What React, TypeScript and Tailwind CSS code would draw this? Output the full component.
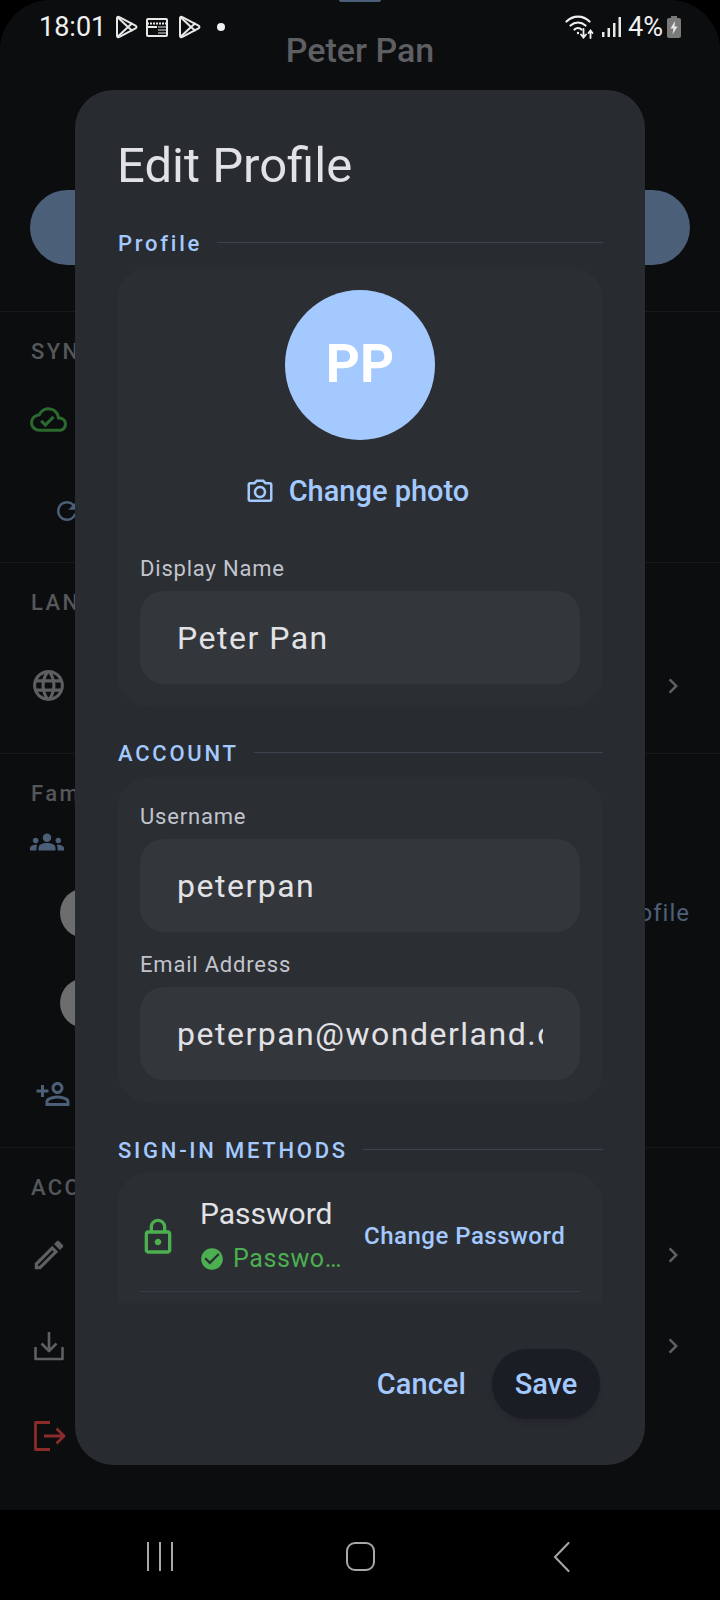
import React from "react";
import {
  MdOutlineCameraAlt,
  MdOutlineCloudDone,
  MdRefresh,
  MdLanguage,
  MdGroups,
  MdOutlinePersonAddAlt,
  MdOutlineEdit,
  MdChevronRight,
  MdOutlineLock,
  MdCheckCircle,
} from "react-icons/md";

function PlayIcon() {
  return (
    <svg width="23" height="24" viewBox="0 0 23 24" fill="none" stroke="#e8e8e8" strokeWidth="2" strokeLinejoin="round" strokeLinecap="round">
      <path d="M2 3.5C2 2 3.2 1.4 4.4 2.1L20.5 10.6C21.8 11.3 21.8 12.7 20.5 13.4L4.4 21.9C3.2 22.6 2 22 2 20.5Z" />
      <path d="M2.6 2.2L13 12L2.6 21.8M13 12L17 8.6M13 12L17 15.4" />
    </svg>
  );
}

function NewsIcon() {
  return (
    <svg width="22" height="22" viewBox="0 0 22 22" fill="none">
      <rect x="1" y="3" width="20" height="17" rx="1" stroke="#e8e8e8" strokeWidth="2" />
      <path d="M1 7.5H21" stroke="#e8e8e8" strokeWidth="2" strokeDasharray="2 1" />
      <rect x="1" y="10" width="10" height="2" fill="#e8e8e8" />
      <path d="M12 11H20M12 14H20M12 17H20" stroke="#9a9a9a" strokeWidth="1.5" />
    </svg>
  );
}

function WifiIcon() {
  return (
    <svg width="30" height="26" viewBox="0 0 30 26" fill="none" stroke="#f0f0f0" strokeLinecap="round">
      <path d="M1.5 7.5C8 1 18 1 24.5 7.5" strokeWidth="2.2" />
      <path d="M5.5 11.5C10 7.5 16 7.5 20.5 11.5" strokeWidth="2.2" />
      <path d="M9.5 15.5C11.5 13.5 14.5 13.5 16.5 15.5" strokeWidth="2.2" />
      <circle cx="13" cy="19" r="1.2" fill="#f0f0f0" stroke="none" />
      <path d="M18.5 15V23M16 20.5L18.5 23.5L21 20.5" strokeWidth="1.8" />
      <path d="M25.5 24V17M23.5 19L25.5 16.5L27.5 19" strokeWidth="1.8" />
    </svg>
  );
}

function SignalIcon() {
  return (
    <svg width="20" height="22" viewBox="0 0 20 22" fill="#e8e8e8">
      <rect x="0" y="16" width="2.5" height="5" />
      <rect x="5.5" y="12" width="2.5" height="9" />
      <rect x="11" y="7" width="2.5" height="14" />
      <rect x="16.5" y="1" width="2.5" height="20" />
    </svg>
  );
}

function BatteryIcon() {
  return (
    <svg width="14" height="22" viewBox="0 0 14 22">
      <rect x="4" y="0" width="6" height="3" fill="#7a7a7a" />
      <rect x="0" y="2" width="14" height="20" rx="2" fill="#7a7a7a" />
      <path d="M8 5L3.5 12.5H6.5L5.5 18.5L10.5 10.5H7.5Z" fill="#e8e8e8" />
    </svg>
  );
}

function DownloadIcon() {
  return (
    <svg width="30" height="30" viewBox="0 0 30 30" fill="none" stroke="#5e5f62" strokeWidth="2.6" strokeLinejoin="round">
      <path d="M15 1V20M7.5 12.5L15 20L22.5 12.5" />
      <path d="M1.5 16V28H28.5V16" />
    </svg>
  );
}

function LogoutIcon() {
  return (
    <svg width="32" height="30" viewBox="0 0 32 30" fill="none" stroke="#8b2b2b" strokeWidth="2.8" strokeLinejoin="round">
      <path d="M16 1.5H1.5V28.5H16" />
      <path d="M10 15H29.5M22.5 7.5L30 15L22.5 22.5" />
    </svg>
  );
}

function Divider() {
  return <div className="h-px bg-[#17181b]" />;
}

function BgLabel({ children }: { children: React.ReactNode }) {
  return <div className="text-[22px] leading-[28px] font-medium tracking-[2.4px] text-[#56575a]">{children}</div>;
}

function BgChevron() {
  return <MdChevronRight size={30} color="#5e5f62" className="shrink-0 -translate-x-px" />;
}

function SectionLabel({ children }: { children: React.ReactNode }) {
  return (
    <div className="flex items-center gap-[15px] h-[28px]">
      <span className="pl-px translate-y-[1px] text-[22px] leading-[28px] font-medium tracking-[2.75px] text-[#a3c9fe] whitespace-nowrap">{children}</span>
      <div className="flex-1 h-px bg-[#3c4350] -translate-y-px" />
    </div>
  );
}

function Field({ label, value }: { label: string; value: string }) {
  return (
    <div>
      <div className="text-[22px] leading-[28px] tracking-[0.8px] text-[#c2c4cc]">{label}</div>
      <div className="mt-[8px] h-[93px] rounded-[24px] bg-[#33363b] px-[37px] flex items-center">
        <div className="overflow-hidden whitespace-nowrap text-[32px] tracking-[1.5px] text-[#e2e2e6]">{value}</div>
      </div>
    </div>
  );
}

export default function App() {
  return (
    <div className="relative w-[720px] h-[1600px] bg-black overflow-hidden font-['Roboto',sans-serif]">
      {/* Page behind the dialog */}
      <div className="h-[1510px] rounded-t-[50px] bg-[#0c0d0f] overflow-hidden flex flex-col">
        <div className="h-[2px] w-[42px] mx-auto bg-[#4b6078] rounded-b-full" />
        <div className="mt-[28px] h-[40px] text-center text-[34px] leading-[40px] font-medium text-[#5e5f62]">Peter Pan</div>
        <div className="mt-[120px] mx-[30px] h-[75px] rounded-[38px] bg-[#4b6078]" />
        <div className="h-[46px]" />
        <Divider />
        <section className="h-[250px] px-[31px] pt-[26px] flex flex-col">
          <BgLabel>SYNC</BgLabel>
          <MdOutlineCloudDone size={37} color="#2a6a2e" className="mt-[35px] -ml-px" />
          <MdRefresh size={30} color="#4b6078" className="mt-[58px] ml-[21px]" />
        </section>
        <Divider />
        <section className="h-[190px] px-[31px] pt-[26px] flex flex-col">
          <BgLabel>LANGUAGE</BgLabel>
          <div className="mt-[50px] flex items-center justify-between">
            <MdLanguage size={37} color="#5e5f62" className="-ml-px" />
            <BgChevron />
          </div>
        </section>
        <Divider />
        <section className="h-[393px] px-[31px] pt-[26px] flex flex-col">
          <BgLabel>Family</BgLabel>
          <MdGroups size={34} color="#4b6078" className="mt-[17px] -ml-px" />
          <div className="mt-[29px] ml-[29px] h-[50px] flex items-center justify-between">
            <div className="w-[50px] h-[50px] rounded-full bg-[#6d6d6d]" />
            <span className="text-[24px] tracking-[1px] text-[#4b6078] -mr-px">Profile</span>
          </div>
          <div className="mt-[40px] ml-[29px] w-[50px] h-[50px] rounded-full bg-[#6d6d6d]" />
          <MdOutlinePersonAddAlt size={36} color="#4b6078" className="mt-[48px] ml-[4px] -scale-x-100" />
        </section>
        <Divider />
        <section className="flex-1 px-[31px] pt-[26px] flex flex-col">
          <BgLabel>ACCOUNT</BgLabel>
          <div className="mt-[33px] h-[40px] flex items-center justify-between">
            <MdOutlineEdit size={38} color="#5e5f62" className="-ml-px" />
            <BgChevron />
          </div>
          <div className="mt-[51px] h-[40px] flex items-center justify-between pl-[3px]">
            <DownloadIcon />
            <BgChevron />
          </div>
          <div className="mt-[50px] h-[40px] flex items-center pl-[3px]">
            <LogoutIcon />
          </div>
        </section>
      </div>

      {/* Navigation bar */}
      <div className="h-[90px] bg-black flex items-center pl-[147px] pt-[3px]">
        <div className="w-[26px] h-[29px] flex justify-between">
          <div className="w-[2px] bg-[#a8a8a8]" />
          <div className="w-[2px] bg-[#a8a8a8]" />
          <div className="w-[2px] bg-[#a8a8a8]" />
        </div>
        <div className="ml-[173px] w-[29px] h-[29px] rounded-[9px] border-[2px] border-[#a8a8a8]" />
        <svg className="ml-[178px]" width="17" height="30" viewBox="0 0 17 30" fill="none" stroke="#a8a8a8" strokeWidth="2" strokeLinecap="round">
          <path d="M15.5 1L2 15L15.5 29" />
        </svg>
      </div>

      {/* Status bar */}
      <div className="absolute left-[39px] right-[39px] top-[12px] h-[30px] flex items-center text-[#f0f0f0]">
        <span className="text-[27px] leading-[30px] w-[76px]">18:01</span>
        <PlayIcon />
        <div className="ml-[8px]"><NewsIcon /></div>
        <div className="ml-[10px]"><PlayIcon /></div>
        <div className="ml-[16px] w-[8px] h-[8px] rounded-full bg-[#f0f0f0]" />
        <div className="ml-auto"><WifiIcon /></div>
        <div className="ml-[7px]"><SignalIcon /></div>
        <span className="ml-[6px] text-[27px] leading-[30px]">4%</span>
        <div className="ml-[4px]"><BatteryIcon /></div>
      </div>

      {/* Dialog */}
      <div className="absolute left-[75px] top-[90px] w-[570px] h-[1375px] rounded-[38px] bg-[#282b30] flex flex-col">
        <div className="px-[42px] pt-[44px] h-[139px] text-[49px] leading-[64px] text-[#e2e2e6]">Edit Profile</div>
        <div className="h-[1074px] overflow-hidden pl-[42px] pr-[42px]">
          <SectionLabel>Profile</SectionLabel>
          <div className="mt-[10px] h-[440px] rounded-[32px] bg-[#2b2e33] px-[23px] pt-[23px]">
            <div className="mx-auto w-[150px] h-[150px] rounded-full bg-[#a3c9fe] flex items-center justify-center text-[53px] font-bold text-white">PP</div>
            <div className="mt-[32px] pr-[6px] h-[40px] flex items-center justify-center gap-[14px] text-[#a3c9fe]">
              <MdOutlineCameraAlt size={30} />
              <span className="text-[29px] font-medium">Change photo</span>
            </div>
            <div className="mt-[43px]"><Field label="Display Name" value="Peter Pan" /></div>
          </div>
          <div className="mt-[32px]"><SectionLabel>ACCOUNT</SectionLabel></div>
          <div className="mt-[10px] h-[326px] rounded-[32px] bg-[#2b2e33] px-[23px] pt-[26px]">
            <Field label="Username" value="peterpan" />
            <div className="mt-[19px]"><Field label="Email Address" value="peterpan@wonderland.com" /></div>
          </div>
          <div className="mt-[33px]"><SectionLabel>SIGN-IN METHODS</SectionLabel></div>
          <div className="mt-[8px] h-[200px] rounded-[32px] bg-[#2b2e33] px-[23px]">
            <div className="h-[120px] flex items-center border-b border-[#3a3d43] pt-[10px]">
              <MdOutlineLock size={40} color="#4caf50" className="shrink-0 -ml-[2px]" />
              <div className="ml-[21px] mb-[4px] w-[149px] shrink-0">
                <div className="ml-px text-[30px] leading-[36px] text-[#e2e2e6]">Password</div>
                <div className="mt-[12px] flex items-center gap-[8px]">
                  <MdCheckCircle size={26} color="#4caf50" className="shrink-0" />
                  <span className="truncate text-[25px] leading-[30px] tracking-[0.6px] text-[#4caf50]">Password set</span>
                </div>
              </div>
              <span className="ml-[16px] mb-[2px] whitespace-nowrap text-[24px] font-medium tracking-[0.5px] text-[#a3c9fe]">Change Password</span>
            </div>
          </div>
        </div>
        <div className="flex-1 flex items-start justify-end pt-[46px] pr-[45px]">
          <span className="h-[70px] pt-px flex items-center text-[29px] font-medium tracking-[0.1px] text-[#a3c9fe]">Cancel</span>
          <span className="ml-[26px] w-[108px] h-[70px] pt-px rounded-[35px] bg-[#1a1d23] shadow-md flex items-center justify-center text-[29px] font-medium text-[#a3c9fe]">Save</span>
        </div>
      </div>
    </div>
  );
}
